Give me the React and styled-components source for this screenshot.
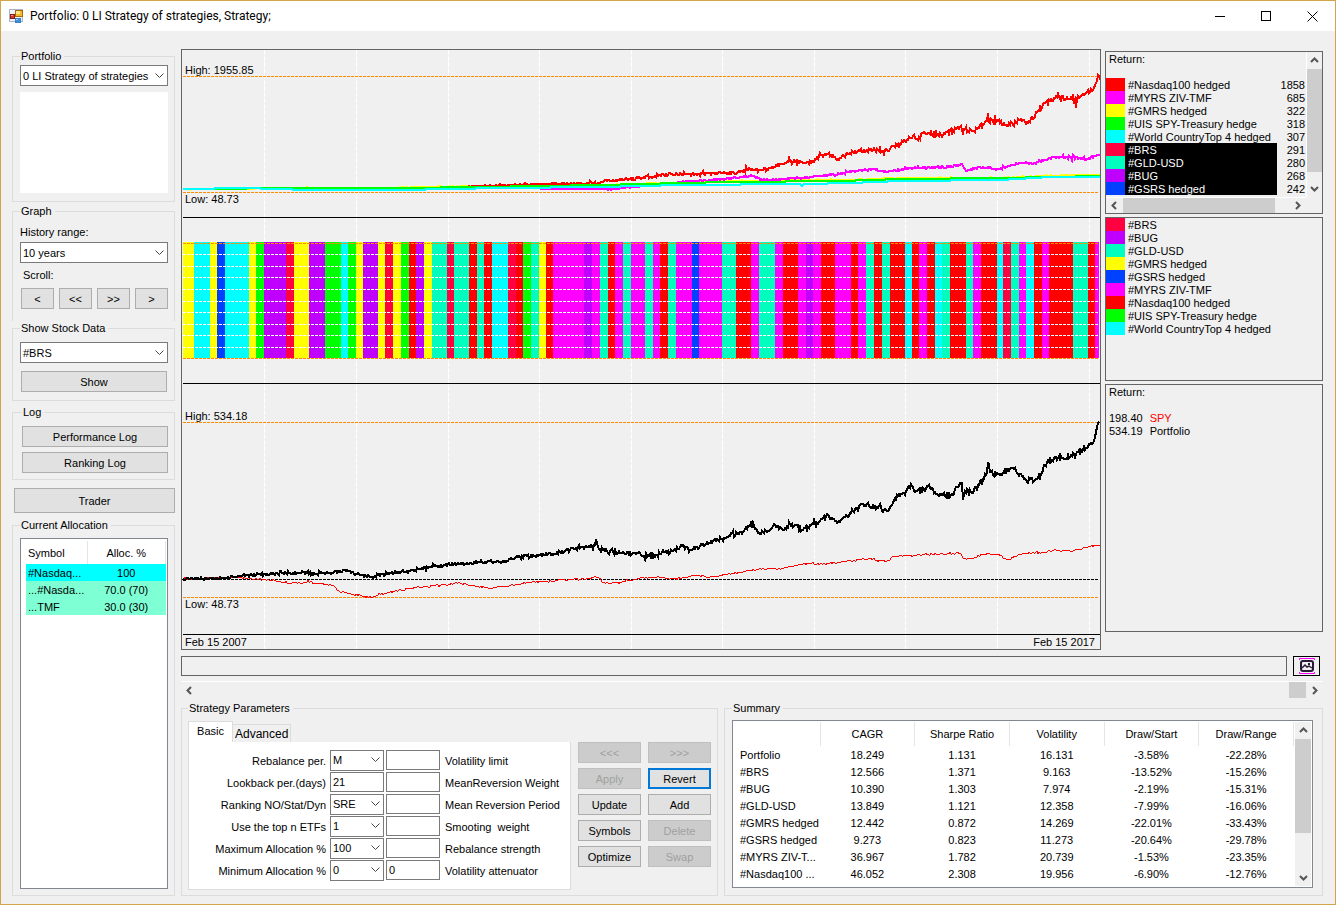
import React from "react"
import styled, { createGlobalStyle, css } from "styled-components"

const GlobalStyle = createGlobalStyle`
  *, *::before, *::after {
    box-sizing: border-box;
  }
  body {
    margin: 0;
    background: #f0f0f0;
    color: #000;
    font-family: "Liberation Sans", Arial, sans-serif;
    font-size: 11px;
    line-height: 14px;
  }
  button, input, select {
    font: inherit;
    color: inherit;
  }
`;

const Window = styled.div`
  display: flex;
  flex-direction: column;
  min-height: 100vh;
  border: 1px solid #d1a64a;
`;

const TitleBar = styled.header`
  display: flex;
  align-items: center;
  height: 30px;
  padding-left: 8px;
  background: #fff;
`;

const Title = styled.h1`
  flex: 1;
  margin: 0 0 0 6px;
  font-family: Roboto, "Open Sans", sans-serif;
  font-size: 12px;
  font-weight: 400;
`;

const WindowButton = styled.button`
  display: grid;
  place-items: center;
  width: 46px;
  height: 30px;
  padding: 0;
  border: 0;
  background: none;
`;

const Body = styled.div`
  display: flex;
  flex: 1;
  gap: 6px;
  padding: 18px 12px 8px 11px;
`;

const Sidebar = styled.aside`
  display: flex;
  flex-direction: column;
  flex: none;
  width: 163px;
`;

const Main = styled.main`
  display: flex;
  flex: 1;
  flex-direction: column;
  min-width: 0;
`;

const Group = styled.fieldset`
  min-width: 0;
  margin: 0 0 ${p => p.$after || 0}px;
  padding: ${p => p.$pad || "7px 6px 8px 7px"};
  border: 1px solid #dcdcdc;
  ${p => p.$open && css`border-bottom: 0;`}
`;

const Legend = styled.legend`
  padding: 0 3px 0 1px;
  line-height: 14px;
`;

const Stack = styled.div`
  display: flex;
  flex-direction: column;
  gap: ${p => p.$gap}px;
`;

const Button = styled.button`
  height: ${p => p.$tall ? 25 : 21}px;
  padding: 0;
  border: 1px solid #adadad;
  background: #e1e1e1;
  text-align: center;
  &:disabled {
    border-color: #bfbfbf;
    background: #ccc;
    color: #a0a0a0;
  }
  ${p => p.$focused && css`border: 2px solid #0078d7;`}
`;

const ShowButton = styled(Button)`
  margin: 0 1px;
`;

const TraderButton = styled(Button)`
  margin: 0 0 5px 2px;
`;

const SelectBox = styled.span`
  display: grid;
  align-items: center;
  > * {
    grid-area: 1 / 1;
  }
  svg {
    justify-self: end;
    margin-right: 4px;
    pointer-events: none;
  }
`;

const NativeSelect = styled.select`
  width: 100%;
  height: 21px;
  padding: 0 16px 0 2px;
  border: 1px solid #7a7a7a;
  border-radius: 0;
  background: #fff;
  appearance: none;
`;

const TextInput = styled.input`
  width: 100%;
  height: 20px;
  padding: 0 2px;
  border: 1px solid #7a7a7a;
  background: #fff;
`;

const BlankBox = styled.div`
  height: 101px;
  background: #fff;
`;

const FieldLabel = styled.label`
  margin-bottom: 3px;
`;

const ScrollLabel = styled.div`
  margin: 5px 0 6px 3px;
`;

const StepButtons = styled.div`
  display: grid;
  grid-template-columns: repeat(4, 1fr);
  gap: 5px;
  margin: 0 0 12px 1px;
`;

const ListFrame = styled.div`
  display: flex;
  flex: 1;
  align-items: flex-start;
  min-width: 0;
  border: 1px solid #828790;
  background: #fff;
`;

const FullGroup = styled(Group)`
  display: flex;
  flex: 1;
`;

const AllocationTable = styled.table`
  width: 100%;
  margin: 2px 1px 0 5px;
  border-collapse: collapse;
  table-layout: fixed;
  th {
    height: 23px;
    padding: 0 2px;
    border-right: 1px solid #e5e5e5;
    font-weight: 400;
  }
  td {
    height: 17px;
    padding: 0 2px;
    text-align: center;
    white-space: nowrap;
  }
  th:first-child, td:first-child {
    width: 61px;
    text-align: left;
  }
`;

const AllocationRow = styled.tr`
  background: ${p => p.$color};
`;

const ChartRow = styled.div`
  display: flex;
  align-items: flex-start;
  gap: 4px;
`;

const ChartFrame = styled.div`
  flex: 1;
  min-width: 0;
  border: 1px solid #646464;
  svg {
    display: block;
    width: 100%;
    height: auto;
  }
`;

const Panels = styled.div`
  display: flex;
  flex: none;
  flex-direction: column;
  gap: 3px;
  width: 218px;
  margin-top: 2px;
`;

const Panel = styled.section`
  min-height: ${p => p.$height}px;
  border: 1px solid #646464;
`;

const ScrollPanel = styled(Panel)`
  display: grid;
  grid-template-columns: 1fr 16px;
  grid-template-rows: 1fr 16px;
`;

const PanelTitle = styled.h2`
  margin: 0 0 11px;
  padding-left: 3px;
  font-size: inherit;
  font-weight: 400;
  line-height: 15px;
`;

const SeriesList = styled.ul`
  margin: 0;
  padding: 0;
  list-style: none;
`;

const SeriesItem = styled.li`
  display: grid;
  grid-template-columns: 19px 152px 1fr;
  grid-template-rows: 13px;
  line-height: 15px;
  white-space: nowrap;
`;

const Swatch = styled.span`
  background: ${p => p.$color};
`;

const SeriesName = styled.span`
  padding-left: 3px;
  ${p => p.$selected && css`
    background: #000;
    color: #fff;
  `}
`;

const SeriesValue = styled.span`
  padding-right: 1px;
  text-align: right;
`;

const ReturnItem = styled.li`
  display: flex;
  gap: 7px;
  height: 13px;
  padding-left: 3px;
  line-height: 15px;
  span {
    color: ${p => p.$color};
  }
`;

const ScrollTrack = styled.div`
  display: flex;
  flex-direction: ${p => p.$vertical ? "column" : "row"};
  background: #f0f0f0;
  ${p => p.$vertical ? css`border-left: 1px solid #fff;` : css`border-top: 1px solid #fff;`}
`;

const ScrollArrow = styled.button`
  display: grid;
  flex: none;
  place-items: center;
  width: ${p => p.$vertical ? "100%" : "17px"};
  height: ${p => p.$vertical ? "17px" : "100%"};
  padding: 0;
  border: 0;
  background: none;
`;

const ScrollSpace = styled.div`
  flex: ${p => p.$flex};
`;

const ScrollThumb = styled.div`
  flex: ${p => p.$flex};
  background: #cdcdcd;
`;

const StatusRow = styled.div`
  display: flex;
  gap: 6px;
  margin: 6px 3px 5px 0;
`;

const StatusBar = styled.div`
  flex: 1;
  height: 20px;
  border: 1px solid #646464;
`;

const ImageButton = styled.button`
  display: grid;
  place-items: center;
  width: 27px;
  height: 20px;
  padding: 0;
  border: 1px solid #000;
  background: #f0f0f0;
`;

const HistoryScroll = styled.div`
  display: grid;
  height: 17px;
  margin-bottom: 3px;
`;

const BottomRow = styled.div`
  display: flex;
  flex: 1;
  gap: 6px;
`;

const ParametersBody = styled.div`
  display: flex;
  gap: 7px;
`;

const TabArea = styled.div`
  width: 383px;
`;

const TabList = styled.div`
  display: flex;
  align-items: flex-end;
  height: 21px;
`;

const Tab = styled.button`
  min-width: 58px;
  height: 18px;
  padding: 0 2px;
  border: 1px solid #dcdcdc;
  border-width: 1px 1px 0 0;
  background: #f0f0f0;
  font-size: 12px;
  white-space: nowrap;
  ${p => p.$active && css`
    min-width: 45px;
    height: 21px;
    padding-bottom: 2px;
    border-left-width: 1px;
    background: #fff;
    font-size: 11px;
  `}
`;

const TabPanel = styled.div`
  display: grid;
  grid-template-columns: 139px 54px 54px 1fr;
  grid-auto-rows: 22px;
  column-gap: 2px;
  align-items: center;
  padding: 7px 0 8px;
  border: 1px solid #dcdcdc;
  border-top: 0;
  background: #fff;
`;

const ParamLabel = styled.label`
  padding: ${p => p.$right ? "2px 2px 0 0" : "2px 0 0 3px"};
  text-align: ${p => p.$right ? "right" : "left"};
  white-space: pre;
`;

const ActionGrid = styled.div`
  display: grid;
  grid-template-columns: 63px 63px;
  grid-auto-rows: 21px;
  gap: 5px 7px;
  padding-top: 21px;
`;

const SummaryTable = styled.table`
  flex: 1;
  width: 100%;
  margin: 1px 0 4px;
  border-collapse: collapse;
  table-layout: fixed;
  th {
    height: 24px;
    padding: 0;
    border-right: 1px solid #e5e5e5;
    font-weight: 400;
  }
  td {
    height: 17px;
    padding: 0;
    text-align: center;
    white-space: nowrap;
  }
  th:first-child, td:first-child {
    width: 87px;
    padding-left: 7px;
    text-align: left;
  }
`;

const SummaryScroll = styled.div`
  display: grid;
  flex: none;
  align-self: stretch;
  width: 17px;
  margin: 1px 1px 1px 0;
`;

const RED = "#ff0000";
const CRIMSON = "#ff0040";
const MAGENTA = "#ff00ff";
const YELLOW = "#ffff00";
const GREEN = "#00ff00";
const CYAN = "#00ffff";
const TEAL = "#00ffbf";
const PURPLE = "#bf00ff";
const BLUE = "#0040ff";
const ORANGE = "#ff8c00";

const returns = [
  { name: "#Nasdaq100 hedged", value: 1858, color: RED },
  { name: "#MYRS ZIV-TMF", value: 685, color: MAGENTA },
  { name: "#GMRS hedged", value: 322, color: YELLOW },
  { name: "#UIS SPY-Treasury hedge", value: 318, color: GREEN },
  { name: "#World CountryTop 4 hedged", value: 307, color: CYAN },
  { name: "#BRS", value: 291, color: CRIMSON, selected: true },
  { name: "#GLD-USD", value: 280, color: TEAL, selected: true },
  { name: "#BUG", value: 268, color: PURPLE, selected: true },
  { name: "#GSRS hedged", value: 242, color: BLUE, selected: true },
];

const legend = [
  { name: "#BRS", color: CRIMSON },
  { name: "#BUG", color: PURPLE },
  { name: "#GLD-USD", color: TEAL },
  { name: "#GMRS hedged", color: YELLOW },
  { name: "#GSRS hedged", color: BLUE },
  { name: "#MYRS ZIV-TMF", color: MAGENTA },
  { name: "#Nasdaq100 hedged", color: RED },
  { name: "#UIS SPY-Treasury hedge", color: GREEN },
  { name: "#World CountryTop 4 hedged", color: CYAN },
];

const allocation = [
  { symbol: "#Nasdaq...", share: "100", color: "#00ffff" },
  { symbol: "...#Nasda...", share: "70.0 (70)", color: "#7fffd4" },
  { symbol: "...TMF", share: "30.0 (30)", color: "#7fffd4" },
];

const summaryColumns = ["", "CAGR", "Sharpe Ratio", "Volatility", "Draw/Start", "Draw/Range"];
const summary = [
  ["Portfolio", "18.249", "1.131", "16.131", "-3.58%", "-22.28%"],
  ["#BRS", "12.566", "1.371", "9.163", "-13.52%", "-15.26%"],
  ["#BUG", "10.390", "1.303", "7.974", "-2.19%", "-15.31%"],
  ["#GLD-USD", "13.849", "1.121", "12.358", "-7.99%", "-16.06%"],
  ["#GMRS hedged", "12.442", "0.872", "14.269", "-22.01%", "-33.43%"],
  ["#GSRS hedged", "9.273", "0.823", "11.273", "-20.64%", "-29.78%"],
  ["#MYRS ZIV-T...", "36.967", "1.782", "20.739", "-1.53%", "-23.35%"],
  ["#Nasdaq100 ...", "46.052", "2.308", "19.956", "-6.90%", "-12.76%"],
];

const parameters = [
  { left: "Rebalance per.", value: "M", select: true, right: "Volatility limit", extra: "" },
  { left: "Lookback per.(days)", value: "21", right: "MeanReversion Weight", extra: "" },
  { left: "Ranking NO/Stat/Dyn", value: "SRE", select: true, right: "Mean Reversion Period", extra: "" },
  { left: "Use the top n ETFs", value: "1", select: true, right: "Smooting  weight", extra: "" },
  { left: "Maximum Allocation %", value: "100", select: true, right: "Rebalance strength", extra: "" },
  { left: "Minimum Allocation %", value: "0", select: true, right: "Volatility attenuator", extra: "0" },
];

const actions = [
  { label: "<<<", disabled: true },
  { label: ">>>", disabled: true },
  { label: "Apply", disabled: true },
  { label: "Revert", focused: true },
  { label: "Update" },
  { label: "Add" },
  { label: "Symbols" },
  { label: "Delete", disabled: true },
  { label: "Optimize" },
  { label: "Swap", disabled: true },
];

// holding per period: start position and colour
const stripes = [
  [183, YELLOW], [194, CYAN], [210, YELLOW], [217, BLUE], [225, CYAN], [249, YELLOW], [256, GREEN],
  [264, PURPLE], [286, CRIMSON], [294, YELLOW], [309, PURPLE], [325, GREEN], [341, CYAN], [348, GREEN],
  [356, YELLOW], [363, PURPLE], [378, YELLOW], [385, CRIMSON], [393, YELLOW], [401, GREEN], [409, RED],
  [416, PURPLE], [424, YELLOW], [432, TEAL], [447, CRIMSON], [454, TEAL], [469, RED], [477, TEAL],
  [484, RED], [492, CYAN], [508, CRIMSON], [516, RED], [523, GREEN], [531, TEAL], [539, YELLOW],
  [546, RED], [553, MAGENTA], [584, PURPLE], [592, MAGENTA], [600, TEAL], [608, RED], [615, MAGENTA],
  [623, TEAL], [631, MAGENTA], [645, TEAL], [653, MAGENTA], [660, RED], [668, TEAL], [676, MAGENTA],
  [692, BLUE], [699, MAGENTA], [722, TEAL], [736, RED], [751, MAGENTA], [759, TEAL], [775, MAGENTA],
  [783, RED], [798, MAGENTA], [806, PURPLE], [813, MAGENTA], [821, RED], [835, MAGENTA], [851, RED],
  [858, MAGENTA], [866, TEAL], [874, RED], [882, TEAL], [890, RED], [905, CYAN], [912, RED],
  [919, MAGENTA], [927, RED], [935, CYAN], [942, TEAL], [950, RED], [966, TEAL], [973, MAGENTA],
  [981, RED], [997, CYAN], [1003, CRIMSON], [1011, TEAL], [1019, MAGENTA], [1026, CYAN], [1034, RED],
  [1042, MAGENTA], [1049, RED], [1073, TEAL], [1088, RED], [1095, MAGENTA], [1099, null],
];

const yearLines = [264, 356, 448, 539, 631, 722, 814, 905, 997, 1089];
const levelLines = [254, 266, 277, 289, 301, 312, 324, 335, 347];

const curves = [
  {
    color: YELLOW, width: 2, noise: 1, seed: 5,
    points: [[183, 189], [296, 188], [340, 189], [428, 187], [475, 186], [560, 186], [640, 184], [740, 181], [850, 180], [900, 178], [1000, 178], [1050, 176], [1100, 175]],
  },
  {
    color: RED, width: 2, noise: 1, growth: 6, seed: 11,
    points: [[465, 187], [483, 186], [508, 185], [547, 184], [600, 183], [604, 181], [640, 178], [660, 175], [687, 174], [737, 173], [750, 169], [767, 169], [790, 161], [803, 163], [813, 162], [817, 157], [828, 154], [838, 159], [853, 152], [873, 150], [887, 150], [898, 144], [907, 140], [913, 136], [917, 139], [925, 133], [943, 135], [960, 127], [967, 132], [977, 129], [987, 121], [988, 113], [989, 122], [997, 120], [1007, 126], [1023, 120], [1028, 123], [1037, 112], [1045, 103], [1055, 98], [1067, 97], [1075, 99], [1076, 108], [1077, 99], [1087, 92], [1093, 90], [1097, 81], [1098, 75], [1100, 80]],
  },
  {
    color: MAGENTA, width: 2, noise: 1, growth: 2, seed: 23,
    points: [[539, 189], [613, 189], [640, 186], [695, 181], [723, 179], [752, 176], [763, 180], [800, 178], [840, 174], [860, 170], [873, 169], [887, 172], [913, 168], [950, 167], [962, 164], [966, 171], [980, 167], [1000, 169], [1020, 163], [1033, 164], [1050, 158], [1070, 157], [1087, 159], [1100, 155]],
  },
  {
    color: GREEN, width: 2, noise: 0, seed: 3,
    points: [[183, 189], [309, 188], [400, 188], [480, 187], [600, 185], [680, 183], [730, 182], [840, 181], [900, 179], [1000, 178], [1100, 176]],
  },
  {
    color: CYAN, width: 2, noise: 0, seed: 7,
    points: [[183, 189], [245, 188], [309, 190], [400, 190], [500, 188], [600, 187], [680, 185], [800, 184], [802, 186], [804, 184], [850, 183], [900, 181], [1000, 180], [1050, 177], [1100, 177]],
  },
  {
    color: RED, width: 1, noise: 2, seed: 31,
    points: [[183, 579], [230, 577], [270, 580], [290, 583], [310, 582], [333, 585], [340, 592], [372, 597], [385, 593], [410, 588], [440, 585], [460, 583], [475, 586], [490, 588], [530, 582], [560, 580], [590, 578], [597, 577], [605, 583], [620, 582], [640, 578], [657, 577], [670, 579], [697, 575], [710, 577], [740, 572], [757, 569], [783, 568], [807, 563], [822, 564], [847, 561], [867, 559], [887, 561], [893, 556], [917, 555], [960, 553], [964, 559], [973, 558], [983, 554], [998, 554], [1007, 560], [1023, 553], [1040, 553], [1053, 550], [1073, 551], [1087, 547], [1100, 545]],
  },
  {
    color: "#000", width: 2, noise: 2, growth: 5, seed: 41,
    points: [[183, 579], [230, 578], [240, 576], [290, 573], [330, 573], [345, 570], [357, 574], [372, 577], [390, 573], [410, 571], [430, 567], [450, 565], [470, 563], [490, 561], [500, 562], [520, 557], [545, 555], [560, 552], [580, 548], [595, 545], [596, 539], [599, 549], [620, 553], [640, 553], [643, 556], [657, 555], [673, 551], [682, 546], [690, 550], [710, 543], [717, 539], [723, 541], [732, 533], [743, 532], [751, 523], [760, 534], [777, 526], [783, 530], [790, 524], [802, 530], [817, 523], [828, 515], [837, 523], [853, 511], [863, 504], [877, 507], [887, 511], [898, 496], [912, 486], [915, 492], [930, 488], [937, 494], [950, 497], [957, 487], [962, 483], [963, 500], [965, 491], [972, 493], [980, 482], [987, 473], [988, 462], [990, 472], [1000, 475], [1012, 468], [1023, 476], [1027, 481], [1038, 478], [1045, 465], [1055, 457], [1070, 457], [1087, 448], [1093, 443], [1096, 432], [1099, 422]],
  },
];

// walks along the key points and adds a repeatable daily jitter
const tracePath = ({ points, noise, growth = 0, seed }) => {
  let state = seed;
  const random = () => {
    state = (state * 16807) % 2147483647;
    return state / 2147483647 - 0.5;
  };
  for (let i = 0; i < 5; i++) random();
  const first = points[0][0];
  const last = points[points.length - 1][0];
  let path = `M${first} ${points[0][1]}`;
  for (let i = 1; i < points.length; i++) {
    const [x0, y0] = points[i - 1];
    const [x1, y1] = points[i];
    for (let x = x0 + 1; x <= x1; x++) {
      const base = y0 + ((y1 - y0) * (x - x0)) / (x1 - x0);
      const progress = (x - first) / (last - first);
      const spread = (noise + growth * progress) * (Math.abs(random()) > 0.42 ? 1.7 : 0.8);
      path += `L${x} ${Math.round(base + (x === x1 ? 0 : random() * spread))}`;
    }
  }
  return path;
};

const Chart = () => (
  <ChartFrame>
    <svg viewBox="182 50 918 599" role="img" aria-label="Portfolio performance" shapeRendering="crispEdges">
      {yearLines.map(x => (
        <line key={x} x1={x + 0.5} x2={x + 0.5} y1="50" y2="649" stroke="#fff" strokeDasharray="5 1" />
      ))}
      {stripes.slice(0, -1).map(([x, color], index) => (
        <rect key={x} x={x} y="242" width={stripes[index + 1][0] - x} height="116" fill={color} />
      ))}
      {levelLines.map(y => (
        <line key={y} x1="183" x2="1098" y1={y + 0.5} y2={y + 0.5} stroke="#fff" strokeDasharray="3 1" />
      ))}
      {[76, 192, 243, 358, 422, 597].map(y => (
        <line key={y} x1="183" x2="1099" y1={y + 0.5} y2={y + 0.5} stroke={ORANGE} strokeDasharray="3 1" />
      ))}
      <line x1="183" x2="1099" y1="579.5" y2="579.5" stroke="#000" strokeDasharray="3 1" />
      {[217, 383, 634].map(y => (
        <line key={y} x1="183" x2="1100" y1={y + 0.5} y2={y + 0.5} stroke="#000" />
      ))}
      {curves.map(curve => (
        <path key={curve.seed} d={tracePath(curve)} fill="none" stroke={curve.color} strokeWidth={curve.width} />
      ))}
      <text x="185" y="74">High: 1955.85</text>
      <text x="185" y="203">Low: 48.73</text>
      <text x="185" y="420">High: 534.18</text>
      <text x="185" y="608">Low: 48.73</text>
      <text x="185" y="646">Feb 15 2007</text>
      <text x="1095" y="646" textAnchor="end">Feb 15 2017</text>
    </svg>
  </ChartFrame>
);

const Select = ({ id, label, value }) => (
  <SelectBox>
    <NativeSelect id={id} aria-label={label} defaultValue={value}>
      <option>{value}</option>
    </NativeSelect>
    <svg width="9" height="6" viewBox="0 0 9 6" fill="none" stroke="#444">
      <path d="M0.5 0.5L4.5 4.5L8.5 0.5" />
    </svg>
  </SelectBox>
);

const arrowPaths = {
  up: "M1 6L4.5 2.5L8 6",
  down: "M1 3L4.5 6.5L8 3",
  left: "M6 1L2.5 4.5L6 8",
  right: "M3 1L6.5 4.5L3 8",
};

const Arrow = ({ direction, vertical }) => (
  <ScrollArrow type="button" aria-label={`Scroll ${direction}`} $vertical={vertical}>
    <svg width="9" height="9" viewBox="0 0 9 9" fill="none" stroke="#555" strokeWidth="2">
      <path d={arrowPaths[direction]} />
    </svg>
  </ScrollArrow>
);

const ScrollBar = ({ vertical, before = "0 0 0px", thumb, after = "1" }) => (
  <ScrollTrack $vertical={vertical}>
    <Arrow direction={vertical ? "up" : "left"} vertical={vertical} />
    <ScrollSpace $flex={before} />
    <ScrollThumb $flex={thumb} />
    <ScrollSpace $flex={after} />
    <Arrow direction={vertical ? "down" : "right"} vertical={vertical} />
  </ScrollTrack>
);

const AppIcon = () => (
  <svg width="15" height="15" viewBox="0 0 15 15">
    <rect x="0.5" y="0.5" width="13" height="12" fill="#eef2f8" stroke="#a9b4c6" />
    <rect x="6.5" y="1.5" width="7" height="6" fill="#f5b92c" stroke="#a8680c" />
    <rect x="7" y="2" width="4" height="3" fill="#ffe48a" />
    <rect x="1.5" y="5.5" width="4" height="4" fill="#d23a2a" stroke="#8c1a14" />
    <rect x="2" y="6" width="2" height="1" fill="#f59a8a" />
    <rect x="6.5" y="9.5" width="5" height="4" fill="#3b8fe0" stroke="#3f7fc8" />
    <rect x="7" y="10" width="2" height="1" fill="#a9d4fb" />
  </svg>
);

const PictureIcon = () => (
  <svg width="16" height="16" viewBox="0 0 16 16" fill="none">
    <path d="M0.5 2V0.5H15.5V2M0.5 14V15.5H15.5V14" stroke="#ff00ff" />
    <rect x="2" y="3" width="12" height="10" rx="2" stroke="#2a1a38" strokeWidth="2" />
    <path d="M3 10L6 7L8 9L10 8L13 10" stroke="#2a1a38" strokeWidth="1.5" />
    <rect x="9" y="5" width="2" height="2" fill="#2a1a38" />
  </svg>
);

const Series = ({ items }) => (
  <SeriesList>
    {items.map(item => (
      <SeriesItem key={item.name}>
        <Swatch $color={item.color} />
        <SeriesName $selected={item.selected}>{item.name}</SeriesName>
        <SeriesValue>{item.value}</SeriesValue>
      </SeriesItem>
    ))}
  </SeriesList>
);

const LeftSide = () => (
  <Sidebar>
    <Group $pad="2px 6px 8px 7px" $after={2}>
      <Legend>Portfolio</Legend>
      <Stack $gap={6}>
        <Select label="Portfolio" value="0 LI Strategy of strategies" />
        <BlankBox />
      </Stack>
    </Group>
    <Group $pad="7px 6px 0 7px" $open>
      <Legend>Graph</Legend>
      <Stack $gap={0}>
        <FieldLabel htmlFor="history">History range:</FieldLabel>
        <Select id="history" value="10 years" />
        <ScrollLabel>Scroll:</ScrollLabel>
        <StepButtons>
          {["<", "<<", ">>", ">"].map(step => (
            <Button type="button" key={step}>{step}</Button>
          ))}
        </StepButtons>
      </Stack>
    </Group>
    <Group $after={4}>
      <Legend>Show Stock Data</Legend>
      <Stack $gap={8}>
        <Select label="Stock" value="#BRS" />
        <ShowButton type="button">Show</ShowButton>
      </Stack>
    </Group>
    <Group $pad="7px 6px 6px 9px" $after={8}>
      <Legend>Log</Legend>
      <Stack $gap={5}>
        <Button type="button">Performance Log</Button>
        <Button type="button">Ranking Log</Button>
      </Stack>
    </Group>
    <TraderButton type="button" $tall>Trader</TraderButton>
    <FullGroup $pad="6px 6px 6px 7px">
      <Legend>Current Allocation</Legend>
      <ListFrame>
        <AllocationTable>
          <thead>
            <tr>
              <th>Symbol</th>
              <th>Alloc. %</th>
            </tr>
          </thead>
          <tbody>
            {allocation.map(row => (
              <AllocationRow key={row.symbol} $color={row.color}>
                <td>{row.symbol}</td>
                <td>{row.share}</td>
              </AllocationRow>
            ))}
          </tbody>
        </AllocationTable>
      </ListFrame>
    </FullGroup>
  </Sidebar>
);

const StrategyParameters = () => (
  <Group $pad="6px 6px 5px 6px">
    <Legend>Strategy Parameters</Legend>
    <ParametersBody>
      <TabArea>
        <TabList role="tablist">
          <Tab type="button" role="tab" aria-selected="true" $active>Basic</Tab>
          <Tab type="button" role="tab" aria-selected="false">Advanced</Tab>
        </TabList>
        <TabPanel role="tabpanel">
          {parameters.map((param, index) => (
            <React.Fragment key={param.left}>
              <ParamLabel htmlFor={`left-${index}`} $right>{param.left}</ParamLabel>
              {param.select
                ? <Select id={`left-${index}`} value={param.value} />
                : <TextInput id={`left-${index}`} defaultValue={param.value} />}
              <TextInput id={`right-${index}`} defaultValue={param.extra} />
              <ParamLabel htmlFor={`right-${index}`}>{param.right}</ParamLabel>
            </React.Fragment>
          ))}
        </TabPanel>
      </TabArea>
      <ActionGrid>
        {actions.map(action => (
          <Button type="button" key={action.label} disabled={action.disabled} $focused={action.focused}>
            {action.label}
          </Button>
        ))}
      </ActionGrid>
    </ParametersBody>
  </Group>
);

const Summary = () => (
  <FullGroup $pad="5px 9px 7px 7px">
    <Legend>Summary</Legend>
    <ListFrame>
      <SummaryTable>
        <thead>
          <tr>
            {summaryColumns.map(column => <th key={column}>{column}</th>)}
          </tr>
        </thead>
        <tbody>
          {summary.map(row => (
            <tr key={row[0]}>
              {row.map((cell, index) => <td key={index}>{cell}</td>)}
            </tr>
          ))}
        </tbody>
      </SummaryTable>
      <SummaryScroll>
        <ScrollBar vertical thumb="95" after="36" />
      </SummaryScroll>
    </ListFrame>
  </FullGroup>
);

export default function App() {
  return (
    <>
      <GlobalStyle />
      <Window>
        <TitleBar>
          <AppIcon />
          <Title>Portfolio: 0 LI Strategy of strategies, Strategy;</Title>
          <WindowButton type="button" aria-label="Minimize">
            <svg width="11" height="11" stroke="#000"><path d="M0 5.5H10" /></svg>
          </WindowButton>
          <WindowButton type="button" aria-label="Maximize">
            <svg width="11" height="11" stroke="#000" fill="none"><rect x="0.5" y="0.5" width="9" height="9" /></svg>
          </WindowButton>
          <WindowButton type="button" aria-label="Close">
            <svg width="11" height="11" stroke="#000"><path d="M0.5 0.5L10.5 10.5M10.5 0.5L0.5 10.5" /></svg>
          </WindowButton>
        </TitleBar>
        <Body>
          <LeftSide />
          <Main>
            <ChartRow>
              <Chart />
              <Panels>
                <ScrollPanel $height={163}>
                  <div>
                    <PanelTitle>Return:</PanelTitle>
                    <Series items={returns} />
                  </div>
                  <ScrollBar vertical thumb="103" after="8" />
                  <ScrollBar thumb="151" after="14" />
                </ScrollPanel>
                <Panel $height={164}>
                  <Series items={legend} />
                </Panel>
                <Panel $height={248}>
                  <PanelTitle>Return:</PanelTitle>
                  <SeriesList>
                    <ReturnItem $color={RED}>198.40 <span>SPY</span></ReturnItem>
                    <ReturnItem $color="#000">534.19 <span>Portfolio</span></ReturnItem>
                  </SeriesList>
                </Panel>
              </Panels>
            </ChartRow>
            <StatusRow>
              <StatusBar />
              <ImageButton type="button" aria-label="Save picture"><PictureIcon /></ImageButton>
            </StatusRow>
            <HistoryScroll>
              <ScrollBar before="1" thumb="0 0 17px" after="0 0 0px" />
            </HistoryScroll>
            <BottomRow>
              <StrategyParameters />
              <Summary />
            </BottomRow>
          </Main>
        </Body>
      </Window>
    </>
  )
}
